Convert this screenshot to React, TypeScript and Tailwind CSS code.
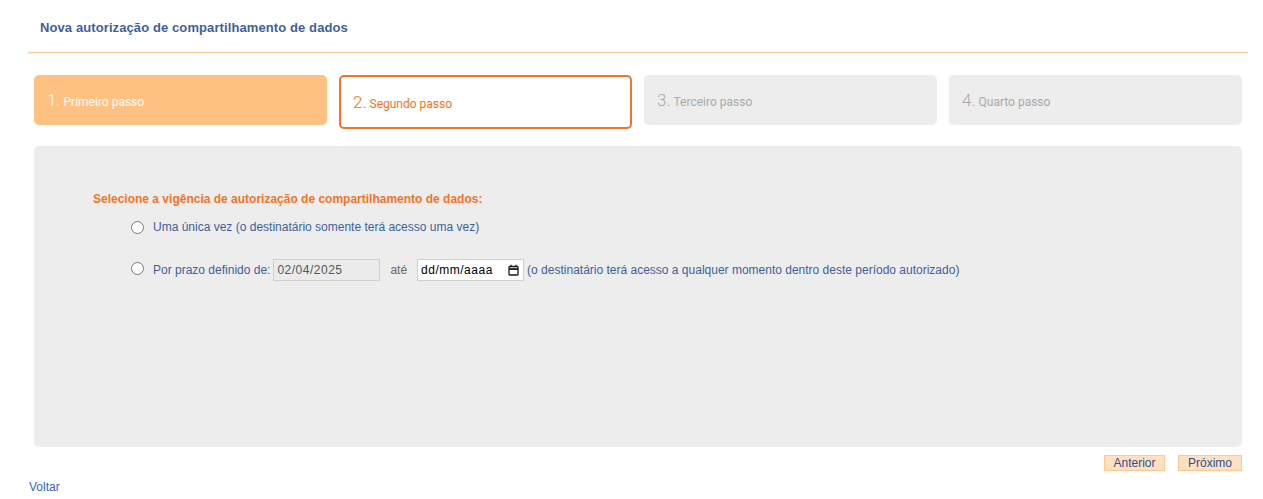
import React from 'react';

const steps = [
  { n: '1', label: 'Primeiro passo', state: 'done' },
  { n: '2', label: 'Segundo passo', state: 'active' },
  { n: '3', label: 'Terceiro passo', state: 'todo' },
  { n: '4', label: 'Quarto passo', state: 'todo' },
];

const stepClass: Record<string, string> = {
  done: 'h-[50px] bg-[#ffc182] text-white px-[13px]',
  active: 'h-[54px] bg-white border-2 border-[#f37426] text-[#f37426] px-[12px]',
  todo: 'h-[50px] bg-[#ededed] text-[#a9a9a9] px-[13px]',
};

const CalendarIcon = () => (
  <svg width="11" height="12" viewBox="0 0 11 12" fill="none" stroke="#1a1a1a" strokeWidth="1.3">
    <rect x="1" y="2.5" width="9" height="8.5" rx="0.8" />
    <line x1="1" y1="5" x2="10" y2="5" strokeWidth="1.8" />
    <line x1="3" y1="0.8" x2="3" y2="3" />
    <line x1="8" y1="0.8" x2="8" y2="3" />
  </svg>
);

export default function App() {
  return (
    <div className="w-full bg-white pl-[28px] pr-[15px] font-['Liberation_Sans',Arial,sans-serif]">
      {/* header */}
      <div className="h-[53px] border-b border-[#ffcc94] pt-[20px] pl-[12px]">
        <h1 className="text-[13px] leading-[16px] font-bold text-[#3f5f9c] tracking-[0.1px]">
          Nova autorização de compartilhamento de dados
        </h1>
      </div>

      <div className="px-[6px]">
        {/* steps */}
        <div className="mt-[22px] grid grid-cols-4 gap-3 items-start font-['Roboto',sans-serif]">
          {steps.map((s) => (
            <div key={s.n} className={`rounded-[5px] flex items-center ${stepClass[s.state]}`}>
              <span className="text-[17px] leading-none font-light">{s.n}.</span>
              <span className="ml-[3px] text-[12px] leading-none pt-[3px]">{s.label}</span>
            </div>
          ))}
        </div>

        {/* panel */}
        <div className="mt-[17px] h-[301px] rounded-[5px] bg-[#ededed] pt-[46px] pl-[59px]">
          <p className="text-[12px] leading-[14px] font-bold text-[#f37426]">
            Selecione a vigência de autorização de compartilhamento de dados:
          </p>
          <div className="mt-[14px] ml-[38px] flex flex-col gap-[25px] text-[12px] text-[#3f5f9c]">
            <label className="flex items-center h-[14px]">
              <input type="radio" name="vig" className="w-[13px] h-[13px]" />
              <span className="ml-[9px]">Uma única vez (o destinatário somente terá acesso uma vez)</span>
            </label>
            <label className="flex items-center h-[22px]">
              <input type="radio" name="vig" className="w-[13px] h-[13px] -mt-[4px]" />
              <span className="ml-[9px]">Por prazo definido de:</span>
              <div className="ml-[3px] w-[107px] h-[22px] border border-[#cfcfcf] bg-[#ebebeb] text-[#555] flex items-center px-[3px] text-[12px] tracking-[0.5px]">
                02/04/2025
              </div>
              <span className="ml-[10px] text-[#666]">até</span>
              <div className="ml-[10px] w-[107px] h-[22px] border border-[#cfcfcf] bg-white text-black flex items-center justify-between pl-[3px] pr-[4px] text-[12px] tracking-[0.5px]">
                <span>dd/mm/aaaa</span>
                <CalendarIcon />
              </div>
              <span className="ml-[3px]">(o destinatário terá acesso a qualquer momento dentro deste período autorizado)</span>
            </label>
          </div>
        </div>

        {/* actions */}
        <div className="mt-[8px] flex justify-end gap-[13px]">
          <button className="h-[16px] w-[61px] bg-[#ffe0c2] border border-[#ffc98f] text-[12px] leading-[14px] text-[#2f4f8f]">
            Anterior
          </button>
          <button className="h-[16px] w-[64px] bg-[#ffe0c2] border border-[#ffc98f] text-[12px] leading-[14px] text-[#2f4f8f]">
            Próximo
          </button>
        </div>
      </div>

      <div className="mt-[3px] pl-[1px] pb-[6px]">
        <a href="#" className="text-[12px] leading-[14px] text-[#3a66c4]">Voltar</a>
      </div>
    </div>
  );
}
